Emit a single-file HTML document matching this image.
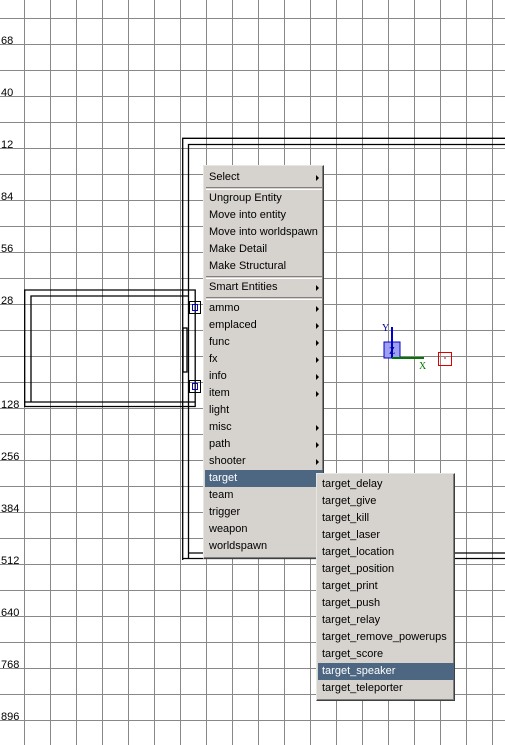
<!DOCTYPE html>
<html><head><style>
body{margin:0;width:505px;height:745px;overflow:hidden;background:#fff;position:relative;font-family:"Liberation Sans",Tahoma,sans-serif;}
svg{position:absolute;left:0;top:0}
.menu{position:absolute;background:#d6d3ce;border:1px solid;border-color:#e8e6e2 #404040 #404040 #e8e6e2;box-shadow:inset -1px -1px 0 #808080;font-size:11px;color:#000}
.it{height:17px;line-height:17px;padding-left:4px;position:relative;white-space:nowrap}
.it.ar::after{content:"";position:absolute;right:4px;top:6px;border-left:3px solid #000;border-top:3px solid transparent;border-bottom:3px solid transparent}
.sep{height:1px;border-top:1px solid #808080;border-bottom:1px solid #fff;margin:1px 1px 0 1px}
.hl{background:#4d6682;color:#fff}
.hl.ar::after{border-left-color:#fff}
.lbl{position:absolute;left:1px;font-size:11px;color:#000}
</style></head><body>
<svg width="505" height="745">
<g stroke="#888" stroke-width="1">
<line x1="24.5" y1="0" x2="24.5" y2="745"/><line x1="50.5" y1="0" x2="50.5" y2="745"/><line x1="76.5" y1="0" x2="76.5" y2="745"/><line x1="102.5" y1="0" x2="102.5" y2="745"/><line x1="128.5" y1="0" x2="128.5" y2="745"/><line x1="154.5" y1="0" x2="154.5" y2="745"/><line x1="180.5" y1="0" x2="180.5" y2="745"/><line x1="206.5" y1="0" x2="206.5" y2="745"/><line x1="232.5" y1="0" x2="232.5" y2="745"/><line x1="258.5" y1="0" x2="258.5" y2="745"/><line x1="284.5" y1="0" x2="284.5" y2="745"/><line x1="310.5" y1="0" x2="310.5" y2="745"/><line x1="336.5" y1="0" x2="336.5" y2="745"/><line x1="362.5" y1="0" x2="362.5" y2="745"/><line x1="388.5" y1="0" x2="388.5" y2="745"/><line x1="414.5" y1="0" x2="414.5" y2="745"/><line x1="440.5" y1="0" x2="440.5" y2="745"/><line x1="466.5" y1="0" x2="466.5" y2="745"/><line x1="492.5" y1="0" x2="492.5" y2="745"/>
<line x1="0" y1="18.5" x2="505" y2="18.5"/><line x1="0" y1="44.5" x2="505" y2="44.5"/><line x1="0" y1="70.5" x2="505" y2="70.5"/><line x1="0" y1="96.5" x2="505" y2="96.5"/><line x1="0" y1="122.5" x2="505" y2="122.5"/><line x1="0" y1="148.5" x2="505" y2="148.5"/><line x1="0" y1="174.5" x2="505" y2="174.5"/><line x1="0" y1="200.5" x2="505" y2="200.5"/><line x1="0" y1="226.5" x2="505" y2="226.5"/><line x1="0" y1="252.5" x2="505" y2="252.5"/><line x1="0" y1="278.5" x2="505" y2="278.5"/><line x1="0" y1="304.5" x2="505" y2="304.5"/><line x1="0" y1="330.5" x2="505" y2="330.5"/><line x1="0" y1="356.5" x2="505" y2="356.5"/><line x1="0" y1="382.5" x2="505" y2="382.5"/><line x1="0" y1="408.5" x2="505" y2="408.5"/><line x1="0" y1="434.5" x2="505" y2="434.5"/><line x1="0" y1="460.5" x2="505" y2="460.5"/><line x1="0" y1="486.5" x2="505" y2="486.5"/><line x1="0" y1="512.5" x2="505" y2="512.5"/><line x1="0" y1="538.5" x2="505" y2="538.5"/><line x1="0" y1="564.5" x2="505" y2="564.5"/><line x1="0" y1="590.5" x2="505" y2="590.5"/><line x1="0" y1="616.5" x2="505" y2="616.5"/><line x1="0" y1="642.5" x2="505" y2="642.5"/><line x1="0" y1="668.5" x2="505" y2="668.5"/><line x1="0" y1="694.5" x2="505" y2="694.5"/><line x1="0" y1="720.5" x2="505" y2="720.5"/>
</g>
<g stroke="#000" stroke-width="1.3" fill="none">
<path d="M182.7 560 V138.3 H505 M188.5 558 V144.5 H505 M188.5 553 H505 M182.7 558.5 H505"/>
<path d="M24.7 406.5 V290 H195.2 V406.5 Z M31 402 V296 H188.5 M24.7 402 H195"/>
<rect x="183" y="328" width="4" height="44"/>
</g>
<rect x="189.5" y="301.5" width="11" height="12" fill="none" stroke="#000"/>
<rect x="192.5" y="304.5" width="5" height="6" fill="none" stroke="#00c"/>
<rect x="189.5" y="380.5" width="11" height="12" fill="none" stroke="#000"/>
<rect x="192.5" y="383.5" width="5" height="6" fill="none" stroke="#00c"/>
<rect x="384" y="342" width="16" height="16" fill="#a0a0f0" stroke="#00c"/>
<line x1="392" y1="327" x2="392" y2="358" stroke="#00c" stroke-width="2"/>
<line x1="392" y1="358" x2="424" y2="358" stroke="#070" stroke-width="2"/>
<text x="389" y="354" font-size="10" fill="#00a" font-family="Liberation Serif">Z</text>
<text x="382" y="331" font-size="10" fill="#00a" font-family="Liberation Serif">Y</text>
<text x="419" y="369" font-size="10" fill="#070" font-family="Liberation Serif">X</text>
<rect x="438.5" y="352.5" width="13" height="13" fill="none" stroke="#d00"/>
<line x1="444" y1="358" x2="446" y2="358" stroke="#d00"/>
</svg>
<div class="lbl" style="top:35px">68</div>
<div class="lbl" style="top:87px">40</div>
<div class="lbl" style="top:139px">12</div>
<div class="lbl" style="top:191px">84</div>
<div class="lbl" style="top:243px">56</div>
<div class="lbl" style="top:295px">28</div>
<div class="lbl" style="top:399px">128</div>
<div class="lbl" style="top:451px">256</div>
<div class="lbl" style="top:503px">384</div>
<div class="lbl" style="top:555px">512</div>
<div class="lbl" style="top:607px">640</div>
<div class="lbl" style="top:659px">768</div>
<div class="lbl" style="top:711px">896</div>

<div class="menu" style="left:203px;top:165px;width:118px;padding:3px 0 3px 1px">
<div class="it ar">Select</div><div class="sep"></div>
<div class="it">Ungroup Entity</div><div class="it">Move into entity</div><div class="it">Move into worldspawn</div><div class="it">Make Detail</div><div class="it">Make Structural</div><div class="sep"></div>
<div class="it ar">Smart Entities</div><div class="sep"></div>
<div class="it ar">ammo</div><div class="it ar">emplaced</div><div class="it ar">func</div><div class="it ar">fx</div><div class="it ar">info</div><div class="it ar">item</div><div class="it">light</div><div class="it ar">misc</div><div class="it ar">path</div><div class="it ar">shooter</div><div class="it ar hl">target</div><div class="it ar">team</div><div class="it ar">trigger</div><div class="it ar">weapon</div><div class="it">worldspawn</div>
</div>
<div class="menu" style="left:316px;top:473px;width:136px;padding:2px 0 3px 1px">
<div class="it">target_delay</div><div class="it">target_give</div><div class="it">target_kill</div><div class="it">target_laser</div><div class="it">target_location</div><div class="it">target_position</div><div class="it">target_print</div><div class="it">target_push</div><div class="it">target_relay</div><div class="it">target_remove_powerups</div><div class="it">target_score</div><div class="it hl">target_speaker</div><div class="it">target_teleporter</div>
</div>
</body></html>
